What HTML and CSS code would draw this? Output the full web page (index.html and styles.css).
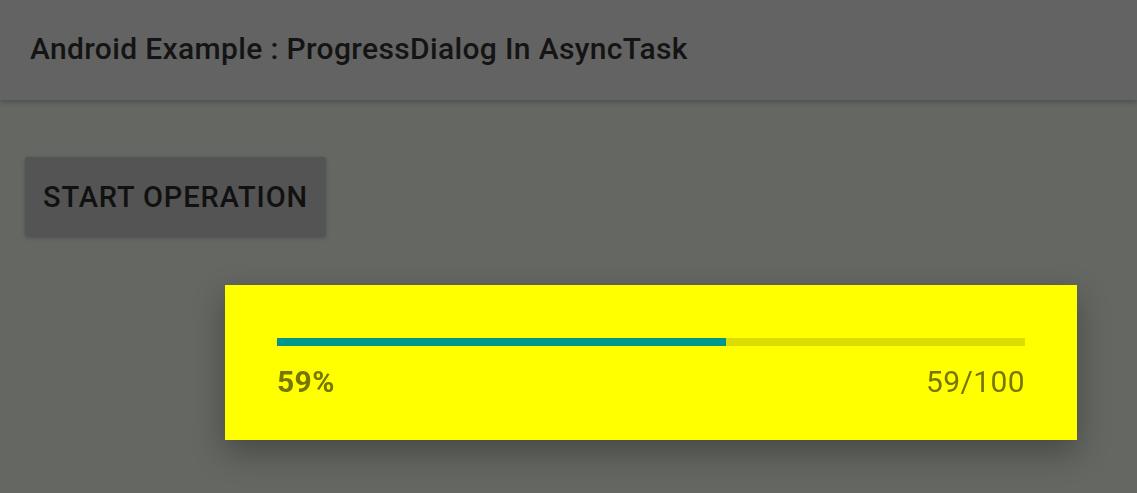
FILE: index.html
```html
<!DOCTYPE html>
<html lang="en">
<head>
    <meta charset="UTF-8">
    <meta name="viewport" content="width=device-width, initial-scale=1.0">
    <title>ProgressDialog In AsyncTask</title>
    <link rel="stylesheet" href="styles.css">
</head>
<body>
    <header class="app-bar">
        <h1>Android Example : ProgressDialog In AsyncTask</h1>
    </header>

    <main class="content">
        <button class="start-btn" type="button">START OPERATION</button>
    </main>

    <div class="progress-dialog">
        <div class="progress-track">
            <div class="progress-fill" style="width: 60%"></div>
        </div>
        <div class="progress-labels">
            <span class="percent">59%</span>
            <span class="count">59/100</span>
        </div>
    </div>
</body>
</html>
```

FILE: styles.css
```css
body {
    font-family: Roboto, "Liberation Sans", Arial, sans-serif;
    margin: 0;
    padding: 0;
    background-color: #656762;
    height: 100vh;
    overflow: hidden;
}
.app-bar {
    height: 100px;
    background-color: #636363;
    box-shadow: 0 2px 5px rgba(0, 0, 0, 0.25);
    display: flex;
    align-items: center;
    padding-left: 30px;
    position: relative;
}
.app-bar h1 {
    margin: 0 0 4px 0;
    font-size: 30px;
    font-weight: 500;
    letter-spacing: 0.35px;
    color: #141414;
}
.content {
    padding: 57px 25px 0;
}
.start-btn {
    width: 301px;
    height: 80px;
    background-color: #545454;
    color: #111;
    font-family: inherit;
    font-size: 29px;
    font-weight: 500;
    letter-spacing: 0.9px;
    border: none;
    border-radius: 3px;
    box-shadow: 0 1px 4px rgba(0, 0, 0, 0.2);
    padding: 0;
}
.progress-dialog {
    position: fixed;
    left: 225px;
    top: 285px;
    width: 852px;
    height: 155px;
    box-sizing: border-box;
    padding: 53px 52px 0;
    background-color: #ffff00;
    box-shadow: 0 12px 30px rgba(0, 0, 0, 0.3);
}
.progress-track {
    height: 8px;
    background-color: #dcdc00;
}
.progress-fill {
    height: 100%;
    background-color: #009688;
}
.progress-labels {
    display: flex;
    justify-content: space-between;
    margin-top: 18px;
    font-size: 30px;
    letter-spacing: 0.4px;
    color: #767600;
}
.progress-labels .percent {
    font-weight: 700;
}
```
